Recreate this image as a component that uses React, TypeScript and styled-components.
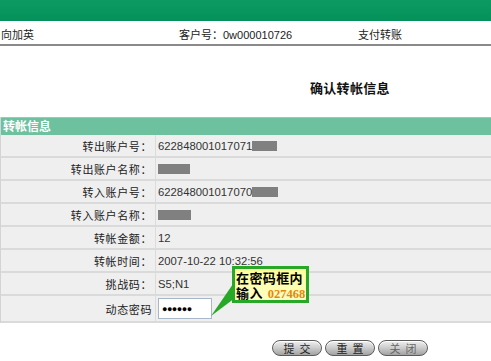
import React from "react";
import styled, { createGlobalStyle } from "styled-components";

const Global = createGlobalStyle`
  html, body { margin: 0; padding: 0; background: #fff; }
  body {
    font-family: "Liberation Sans", Arial, "Noto Sans CJK SC", sans-serif;
    font-size: 11px;
    color: #222;
    width: 491px;
    height: 361px;
    overflow: hidden;
  }
`;

const Page = styled.div`
  display: flex;
  flex-direction: column;
  width: 491px;
`;

const TopBar = styled.div`
  height: 21px;
  background: linear-gradient(#0c9a62, #05905a);
`;

const InfoRow = styled.div`
  display: grid;
  grid-template-columns: 178px 179px 1fr;
  align-items: end;
  border-bottom: 2px solid #8a8a8a;
  box-sizing: border-box;
  height: 25px;
  padding-left: 1px;
  line-height: 14px;
  padding-bottom: 2px;
`;

const InfoCell = styled.div`
  white-space: nowrap;
`;

const TitleWrap = styled.div`
  height: 71px;
  display: flex;
  align-items: center;
  padding-left: 310px;
  padding-top: 12px;
  box-sizing: border-box;
`;

const Title = styled.div`
  font-size: 13px;
  font-weight: bold;
  color: #111;
  letter-spacing: 0.3px;
`;

const Table = styled.div`
  position: relative;
  display: flex;
  flex-direction: column;
  border-left: 1px solid #d4d4d4;
`;

const SectionHead = styled.div`
  height: 18px;
  background: #6dc19f;
  border-top: 1px solid #8fd0b6;
  color: #fff;
  font-weight: bold;
  font-size: 12px;
  line-height: 18px;
  padding-left: 2px;
  box-sizing: border-box;
`;

const Row = styled.div<{ $h?: number }>`
  display: grid;
  grid-template-columns: 155px 1fr;
  height: ${(p) => p.$h ?? 23}px;
  background: #efefef;
  border-bottom: 2px solid #dadada;
  box-sizing: border-box;
`;

const Label = styled.div`
  display: flex;
  align-items: center;
  justify-content: flex-end;
  padding-right: 3px;
  border-right: 1px solid #dcdcdc;
  color: #222;
  letter-spacing: 0.6px;
`;

const Value = styled.div`
  display: flex;
  align-items: center;
  padding-left: 2px;
  color: #333;
  font-size: 11.3px;
`;

const Redact = styled.span<{ $w: number }>`
  display: inline-block;
  width: ${(p) => p.$w}px;
  height: 10px;
  background: #808080;
`;

const PwInput = styled.div`
  width: 54px;
  height: 21px;
  background: #fff;
  border: 1px solid #a9b8c8;
  box-sizing: border-box;
  display: flex;
  align-items: center;
  padding-left: 3px;
  font-size: 9px;
  letter-spacing: -0.5px;
  color: #000;
`;

const Callout = styled.div`
  position: absolute;
  left: 231px;
  top: 149px;
  width: 77px;
  height: 37px;
  box-sizing: border-box;
  border: 3px solid #27a827;
  background: linear-gradient(#ffff9a, #fdfcc4);
  display: flex;
  flex-direction: column;
  justify-content: center;
  padding-left: 1px;
`;

const CalloutLine = styled.div`
  font-size: 13px;
  line-height: 15px;
  height: 15px;
  font-weight: bold;
  color: #000;
  white-space: nowrap;
  font-family: "Noto Sans CJK SC", sans-serif;
  letter-spacing: 0.4px;
`;

const CalloutNum = styled.span`
  font-family: "Liberation Serif", "Times New Roman", serif;
  font-weight: bold;
  font-size: 12.5px;
  color: #e5870a;
  margin-left: 5px;
  letter-spacing: 0;
`;

const Tail = styled.svg`
  position: absolute;
  left: 205px;
  top: 165px;
  overflow: visible;
`;

const Buttons = styled.div`
  display: flex;
  gap: 3px;
  padding-left: 272px;
  padding-top: 17px;
`;

const Btn = styled.div<{ $dim?: boolean }>`
  width: 50px;
  height: 16px;
  box-sizing: border-box;
  border: 1px solid #5a5a5a;
  border-radius: 8px;
  background: linear-gradient(#f0f0f0 0%, #cfcfcf 45%, #a2a2a2 100%);
  display: flex;
  align-items: center;
  justify-content: center;
  font-size: 11px;
  letter-spacing: 5px;
  padding-left: 5px;
  color: ${(p) => (p.$dim ? "#666" : "#222")};
  box-shadow: inset 0 1px 0 #fff;
`;

const rows: { label: string; value: React.ReactNode }[] = [
  { label: "转出账户号：", value: <>622848001017071<Redact $w={25} /></> },
  { label: "转出账户名称：", value: <Redact $w={32} /> },
  { label: "转入账户号：", value: <>622848001017070<Redact $w={26} /></> },
  { label: "转入账户名称：", value: <Redact $w={33} /> },
  { label: "转帐金额：", value: "12" },
  { label: "转帐时间：", value: "2007-10-22 10:32:56" },
  { label: "挑战码：", value: "S5;N1" },
];

export default function App() {
  return (
    <>
      <Global />
      <Page>
        <TopBar />
        <InfoRow>
          <InfoCell>向加英</InfoCell>
          <InfoCell>客户号：0w000010726</InfoCell>
          <InfoCell>支付转账</InfoCell>
        </InfoRow>
        <TitleWrap>
          <Title>确认转帐信息</Title>
        </TitleWrap>
        <Table>
          <SectionHead>转帐信息</SectionHead>
          {rows.map((r) => (
            <Row key={r.label}>
              <Label>{r.label}</Label>
              <Value>{r.value}</Value>
            </Row>
          ))}
          <Row $h={27}>
            <Label>动态密码</Label>
            <Value>
              <PwInput>●●●●●●</PwInput>
            </Value>
          </Row>
          <Tail width="40" height="40">
            <polygon points="27,2 29,16 5,34" fill="#27a827" />
          </Tail>
          <Callout>
            <CalloutLine>在密码框内</CalloutLine>
            <CalloutLine>
              输入<CalloutNum>027468</CalloutNum>
            </CalloutLine>
          </Callout>
        </Table>
        <Buttons>
          <Btn>提交</Btn>
          <Btn>重置</Btn>
          <Btn $dim>关闭</Btn>
        </Buttons>
      </Page>
    </>
  );
}
